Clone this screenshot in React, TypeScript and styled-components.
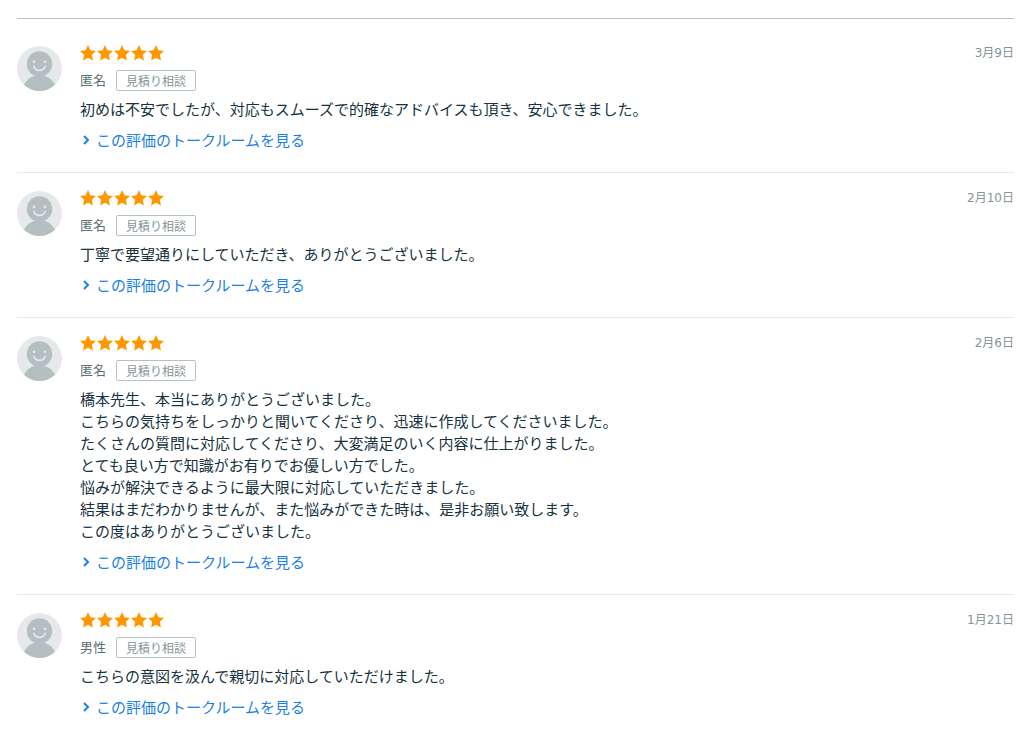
import React from "react";
import styled, { createGlobalStyle } from "styled-components";

const GlobalStyle = createGlobalStyle`
  *, *::before, *::after { box-sizing: border-box; }
  body {
    margin: 0;
    background: #fff;
    color: #16323e;
    font-family: "Noto Sans CJK JP", sans-serif;
    font-size: 15px;
    line-height: 22px;
  }
`;

const Page = styled.main`
  padding: 18px 10px 0 17px;
`;

const ReviewList = styled.ul`
  margin: 0;
  padding: 9px 0 0;
  list-style: none;
  border-top: 1px solid #b9c4c4;
`;

const ReviewItem = styled.li`
  display: flex;
  align-items: flex-start;
  gap: 18px;
  padding: 17px 0 21px;

  & + & {
    border-top: 1px solid #e5e8e8;
  }
`;

const AvatarImage = styled.svg`
  flex: none;
  width: 45px;
  height: 45px;
  margin-top: 1px;
`;

const Content = styled.div`
  flex: 1;
  min-width: 0;
`;

const Header = styled.div`
  display: flex;
  align-items: center;
  justify-content: space-between;
  height: 16px;
`;

const Stars = styled.div`
  display: flex;
  gap: 1px;
`;

const StarIcon = styled.svg`
  width: 16px;
  height: 16px;
  fill: #ff9800;
`;

const PostedOn = styled.time`
  color: #859499;
  font-family: "DejaVu Sans", "Noto Sans CJK JP", sans-serif;
  font-size: 12px;
  line-height: 16px;
`;

const Reviewer = styled.div`
  display: flex;
  align-items: flex-end;
  gap: 10px;
  margin-top: 8px;
  color: #5d6f76;
  font-size: 13px;
  line-height: 22px;
`;

const Tag = styled.span`
  padding: 0 9px;
  border: 1px solid #b5c0c2;
  border-radius: 2px;
  color: #859499;
  font-size: 12px;
  line-height: 19px;
`;

const Comment = styled.p`
  margin: 7px 0 9px;
  white-space: pre-line;
`;

const TalkroomLink = styled.a`
  display: inline-flex;
  align-items: center;
  gap: 4px;
  color: #1b7fe3;
  text-decoration: none;
  vertical-align: top;

  &:hover {
    text-decoration: underline;
  }
`;

const Chevron = styled.svg`
  width: 12px;
  height: 12px;
  fill: none;
  stroke: currentColor;
  stroke-width: 2;
`;

type Review = {
  name: string;
  date: string;
  dateTime: string;
  rating: number;
  comment: string;
};

const reviews: Review[] = [
  {
    name: "匿名",
    date: "3月9日",
    dateTime: "03-09",
    rating: 5,
    comment: "初めは不安でしたが、対応もスムーズで的確なアドバイスも頂き、安心できました。",
  },
  {
    name: "匿名",
    date: "2月10日",
    dateTime: "02-10",
    rating: 5,
    comment: "丁寧で要望通りにしていただき、ありがとうございました。",
  },
  {
    name: "匿名",
    date: "2月6日",
    dateTime: "02-06",
    rating: 5,
    comment: [
      "橋本先生、本当にありがとうございました。",
      "こちらの気持ちをしっかりと聞いてくださり、迅速に作成してくださいました。",
      "たくさんの質問に対応してくださり、大変満足のいく内容に仕上がりました。",
      "とても良い方で知識がお有りでお優しい方でした。",
      "悩みが解決できるように最大限に対応していただきました。",
      "結果はまだわかりませんが、また悩みができた時は、是非お願い致します。",
      "この度はありがとうございました。",
    ].join("\n"),
  },
  {
    name: "男性",
    date: "1月21日",
    dateTime: "01-21",
    rating: 5,
    comment: "こちらの意図を汲んで親切に対応していただけました。",
  },
];

function Avatar() {
  return (
    <AvatarImage viewBox="0 0 45 45" aria-hidden="true">
      <circle cx="22.5" cy="22.5" r="22.5" fill="#e5e9ea" />
      <g fill="#b5bfc2">
        <circle cx="22.5" cy="18" r="12.7" />
        <path d="M18 28h9v4h-9z" />
        <path d="M7 38.8C9.5 34 13.500 30.800 18 29.800H27C31.500 30.800 35.500 34 38 38.800A22.500 22.500 0 0 1 7 38.800Z" />
      </g>
      <circle cx="17" cy="15.800" r="1.400" fill="#e5e9ea" />
      <circle cx="28" cy="15.800" r="1.400" fill="#e5e9ea" />
      <path d="M16.800 20.200c1.700 5.500 9.700 5.500 11.400 0" fill="none" stroke="#e5e9ea" strokeWidth="1.600" strokeLinecap="round" />
    </AvatarImage>
  );
}

function Rating({ value }: { value: number }) {
  return (
    <Stars role="img" aria-label={`${value}`}>
      {Array.from({ length: value }, (_, i) => (
        <StarIcon key={i} viewBox="0 0 16 16" aria-hidden="true">
          <path d="M8 0 10.400 5.200 16 5.900 11.900 9.800 12.900 15.500 8 12.700 3.100 15.500 4.100 9.800 0 5.900 5.600 5.200Z" />
        </StarIcon>
      ))}
    </Stars>
  );
}

export default function App() {
  return (
    <>
      <GlobalStyle />
      <Page>
        <ReviewList>
          {reviews.map((review) => (
            <ReviewItem key={review.dateTime}>
              <Avatar />
              <Content>
                <Header>
                  <Rating value={review.rating} />
                  <PostedOn dateTime={review.dateTime}>{review.date}</PostedOn>
                </Header>
                <Reviewer>
                  <span>{review.name}</span>
                  <Tag>見積り相談</Tag>
                </Reviewer>
                <Comment>{review.comment}</Comment>
                <TalkroomLink href="#">
                  <Chevron viewBox="0 0 12 12" aria-hidden="true">
                    <path d="M4 2 8 6 4 10" />
                  </Chevron>
                  この評価のトークルームを見る
                </TalkroomLink>
              </Content>
            </ReviewItem>
          ))}
        </ReviewList>
      </Page>
    </>
  );
}
